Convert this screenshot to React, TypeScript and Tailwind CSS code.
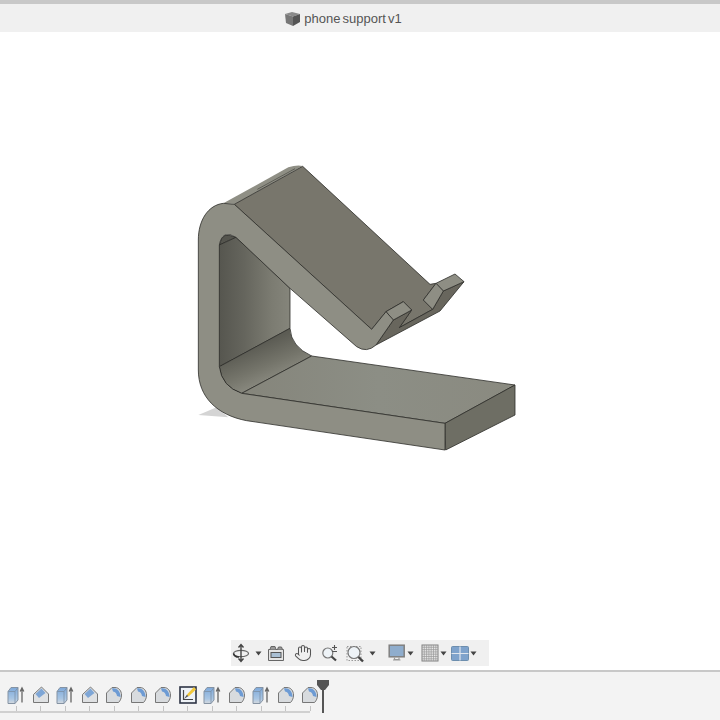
import React from "react";
import { Hand } from "lucide-react";

const Caret = () => (
  <svg width="7" height="5" viewBox="0 0 7 5" className="shrink-0">
    <path d="M0.5 0.5H6.5L3.5 4.5Z" fill="#444" />
  </svg>
);

const Orbit = () => (
  <svg width="20" height="20" viewBox="0 0 20 20" fill="none">
    <ellipse cx="10" cy="10.5" rx="7.5" ry="3.2" stroke="#666" strokeWidth="1.2" />
    <path d="M10 2V18M7.5 4.5L10 1.5L12.5 4.5M7.5 15.5L10 18.5L12.5 15.5" stroke="#444" strokeWidth="1.4" />
    <path d="M2.5 10.5C3 13 6 14 8 14" stroke="#333" strokeWidth="1.6" />
  </svg>
);
const LookAt = () => (
  <svg width="18" height="18" viewBox="0 0 18 18" fill="none">
    <path d="M1.5 5.5H16.5V16.5H1.5Z" fill="#e4e4e4" stroke="#666" />
    <path d="M3 5.5L4 2.5H8L9 5.5M10.5 5.5L11.5 3H14.5L15.5 5.5" fill="#999" stroke="#666" />
    <rect x="4" y="8.5" width="10" height="5" fill="#a9bfd3" stroke="#555" />
  </svg>
);
const ZoomPM = () => (
  <svg width="18" height="18" viewBox="0 0 18 18" fill="none">
    <circle cx="6.8" cy="9" r="5" fill="#eef3f7" stroke="#777" strokeWidth="1.2" />
    <path d="M10.5 12.5L15 16.5" stroke="#444" strokeWidth="2.2" />
    <path d="M11 3.5H16M13.5 1V6M11 7.5H16" stroke="#555" strokeWidth="1.1" />
  </svg>
);
const Fit = () => (
  <svg width="19" height="19" viewBox="0 0 19 19" fill="none">
    <rect x="1" y="2.5" width="14" height="14" stroke="#999" strokeDasharray="1.5 1.5" />
    <circle cx="8" cy="8.5" r="6" fill="#eef3f7" stroke="#777" strokeWidth="1.2" />
    <path d="M12.5 13L17 17.5" stroke="#444" strokeWidth="2.4" />
  </svg>
);
const Display = () => (
  <svg width="18" height="18" viewBox="0 0 18 18" fill="none">
    <rect x="1.2" y="1.2" width="15" height="11.6" fill="#8fadcd" stroke="#808080" strokeWidth="1.5" />
    <path d="M6.5 13.5V15.5H11V13.5M5 16H12.5" stroke="#999" strokeWidth="1.2" />
  </svg>
);
const Grid = () => (
  <svg width="18" height="18" viewBox="0 0 18 18" fill="none">
    <rect x="1" y="1" width="16" height="16" fill="#e6e6e6" stroke="#808080" />
    <path d="M3.3 1V17M5.6 1V17M7.9 1V17M10.2 1V17M12.5 1V17M14.8 1V17M1 3.3H17M1 5.6H17M1 7.9H17M1 10.2H17M1 12.5H17M1 14.8H17" stroke="#999" strokeWidth="0.7" />
  </svg>
);
const Views = () => (
  <svg width="18" height="15" viewBox="0 0 18 15" fill="none">
    <rect x="0.5" y="0.5" width="17" height="14" rx="1" fill="#7fa3cc" stroke="#6d8eae" />
    <path d="M9 0.5V14.5M0.5 7.5H17.5" stroke="#dfe6ee" strokeWidth="1.2" />
  </svg>
);

const Extrude = () => (
  <svg width="20" height="20" viewBox="0 0 20 20" fill="none">
    <defs>
      <linearGradient id="ex" x1="0" x2="0" y1="0" y2="1">
        <stop offset="0" stopColor="#7ea9da" />
        <stop offset="0.7" stopColor="#a9c6e4" />
        <stop offset="1" stopColor="#d5d9dd" />
      </linearGradient>
    </defs>
    <path d="M2 6.5L5 2.5H12V15L9 18.5H2Z" fill="url(#ex)" stroke="#8593a3" />
    <path d="M2 6.5H9V18.5M9 6.5L12 2.5" stroke="#7b8fa6" strokeWidth="0.8" />
    <path d="M16 17.5V4.5M14.2 6.5L16 3L17.8 6.5" stroke="#666" strokeWidth="1.3" />
  </svg>
);
const Chamfer = () => (
  <svg width="18" height="18" viewBox="0 0 18 18" fill="none">
    <path d="M1.5 8.5L9.5 1L16.5 8V16.5H1.5Z" fill="#dfe1e3" stroke="#777" strokeLinejoin="round" />
    <path d="M3.5 8L9.5 2.5L13.5 7L7 12Z" fill="#7ea6d6" />
  </svg>
);
const Fillet = () => (
  <svg width="18" height="18" viewBox="0 0 18 18" fill="none">
    <path d="M1.5 7L7 1.5H10C14 1.5 16.5 5 16.5 9C16.5 12 15.5 14.5 13.5 16.5H1.5Z" fill="#d8dbde" stroke="#777" strokeLinejoin="round" />
    <path d="M7 2.5C11 1.5 15.5 4.5 15.5 11L12 10C11.8 8 10.5 5.5 8 5.5Z" fill="#6d9bd4" />
  </svg>
);
const Sketch = () => (
  <svg width="18" height="18" viewBox="0 0 18 18" fill="none">
    <rect x="1" y="1" width="16" height="16" fill="#eef2f6" stroke="#2d3445" strokeWidth="1.6" />
    <path d="M4.5 4V13.5H14" stroke="#444" strokeWidth="1.2" />
    <path d="M5 13L8 8.5L9.5 10Z" fill="#555" />
    <path d="M8 8.5L15 1L17 3.5L9.5 10.5Z" fill="#f2c83a" />
  </svg>
);

const timeline = [Extrude, Chamfer, Extrude, Chamfer, Fillet, Fillet, Fillet, Sketch, Extrude, Fillet, Extrude, Fillet, Fillet];

const Model = () => (
  <svg width="350" height="310" viewBox="0 0 1050 930" className="blur-[0.3px]">
    <defs>
      <linearGradient id="wall" x1="0" x2="1" y1="0" y2="0">
        <stop offset="0" stopColor="#56564f" />
        <stop offset="0.35" stopColor="#65655d" />
        <stop offset="0.75" stopColor="#7c7c72" />
        <stop offset="1" stopColor="#85857b" />
      </linearGradient>
      <linearGradient id="fillet" x1="0.35" x2="0.65" y1="0.3" y2="0.8">
        <stop offset="0" stopColor="#5c5c54" />
        <stop offset="0.55" stopColor="#75756b" />
        <stop offset="1" stopColor="#8c8c82" />
      </linearGradient>
      <linearGradient id="base" x1="0" x2="1" y1="0" y2="0">
        <stop offset="0" stopColor="#85857b" />
        <stop offset="0.5" stopColor="#8c8e85" />
        <stop offset="1" stopColor="#8a8a80" />
      </linearGradient>
    </defs>
    <g stroke="#2d2d2a" strokeWidth="2.4" strokeLinejoin="round">
      <path d="M55 795L110 772L145 802Z" fill="#d4d4d4" stroke="none" />
      <path d="M130 160L325 52Q350 44 368 48L165 162Z" fill="#8f8f85" stroke="none" />
      <path d="M232 118L345 56" stroke="#44443e" strokeWidth="2" fill="none" />
      <path d="M163 163L368 49L750 403L768 400L730 450L758 478L658 533L695 480L670 455L618 485L575 538Z" fill="#78766c" />
      <path d="M640 510L695 480L658 533L758 478L790 423L852 395L780 483L588 585Z" fill="#68665d" />
      <path d="M618 485L670 455L695 480L640 510Z" fill="#8e8e84" />
      <path d="M768 400L825 372L852 395L790 423Z" fill="#8e8e84" />
      <path d="M768 400L790 423L758 478L730 450Z" fill="#8e8e84" />
      <path d="M118 285L125 265Q135 253 145 255L168 262Z" fill="#55554e" />
      <path d="M118 285L168 262L330 415V535L118 650Z" fill="url(#wall)" />
      <path d="M118 650L330 535Q333 590 395 618L185 730Q125 710 118 650Z" fill="url(#fillet)" />
      <path d="M185 730L395 618L1005 705L795 820Z" fill="url(#base)" />
      <path d="M795 820L1005 705V795L797 900Z" fill="#6e6e64" />
      <path d="M163 163L575 538L618 485L640 510L588 585Q560 610 530 590L330 415L168 262Q150 250 135 255Q122 262 118 285V650Q125 710 185 730L795 820V900L200 812C110 795 55 740 55 660V270C55 210 85 165 130 160Z" fill="#8e8e84" />
    </g>
  </svg>
);

export default function App() {
  return (
    <div className="w-[720px] h-[720px] flex flex-col bg-white overflow-hidden font-['Liberation_Sans',sans-serif]">
      <header className="h-[32px] shrink-0 border-t-[4px] border-[#c8c8c8] bg-[#f0f0f0] flex items-center justify-center gap-[3px] pr-[34px] pt-[2px]">
        <svg width="17" height="16" viewBox="0 0 17 16" className="blur-[0.3px]">
          <path d="M1 3L8 1L16 3L9 5.5Z" fill="#8a8a8a" />
          <path d="M1 3L9 5.5V15L2 12Z" fill="#777" />
          <path d="M9 5.5L16 3V11L9 15Z" fill="#555" />
        </svg>
        <span className="text-[13px] text-[#555] [word-spacing:-1.5px]">phone support v1</span>
      </header>

      <main className="flex-1 flex flex-col min-h-0">
        <div className="pt-[118px] pl-[180px] flex-1 min-h-0">
          <Model />
        </div>
        <div className="h-[30px] flex items-start justify-center">
          <div className="w-[258px] h-[26px] bg-[#f0f0f0] flex items-center blur-[0.3px]">
            <div className="w-[20px] flex justify-center"><Orbit /></div>
            <div className="ml-[4px] w-[9px]"><Caret /></div>
            <div className="w-[24px] flex justify-center"><LookAt /></div>
            <div className="w-[30px] flex justify-center"><Hand size={18} color="#555" strokeWidth={1.4} /></div>
            <div className="w-[23px] flex justify-center"><ZoomPM /></div>
            <div className="w-[28px] flex justify-center"><Fit /></div>
            <div className="w-[10px]"><Caret /></div>
            <div className="w-[20px] ml-[8px] flex justify-center"><Display /></div>
            <div className="w-[7px]"><Caret /></div>
            <div className="w-[20px] ml-[6px] flex justify-center"><Grid /></div>
            <div className="w-[7px]"><Caret /></div>
            <div className="w-[20px] ml-[3px] flex justify-center"><Views /></div>
            <div className="w-[7px]"><Caret /></div>
          </div>
        </div>
      </main>

      <footer className="relative h-[50px] shrink-0 border-t-[2px] border-[#c8c8c8] bg-[#f3f3f3] pt-[12px]">
        <div className="w-[310px] pl-[4px] h-[29px] flex border-b-[2px] border-[#d0d0d0]">
          {timeline.map((Icon, i) => (
            <div key={i} className="w-[24.5px] shrink-0 flex flex-col items-center">
              <div className="h-[22px] flex items-center justify-center blur-[0.3px]"><Icon /></div>
              <div className="w-px h-[5px] bg-[#c4c4c4]" />
            </div>
          ))}
        </div>
        <svg width="14" height="34" viewBox="0 0 14 34" className="absolute left-[316px] top-[8px]">
          <path d="M1 0H13V5L9 10H8V33H6V10H5L1 5Z" fill="#555" />
        </svg>
      </footer>
    </div>
  );
}
